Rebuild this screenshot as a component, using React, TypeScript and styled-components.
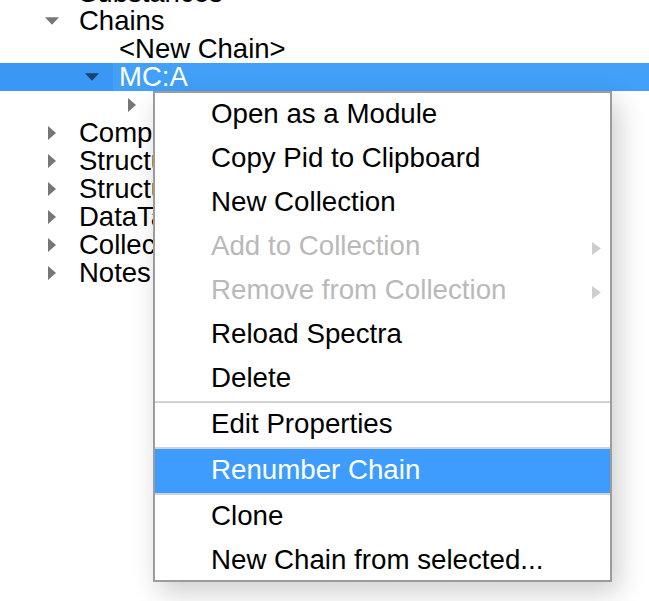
import styled, { createGlobalStyle } from "styled-components";

const GlobalStyle = createGlobalStyle`
  html, body {
    margin: 0;
    padding: 0;
    background: #ffffff;
    overflow: hidden;
  }
  body {
    font-family: "Liberation Sans", Arial, Helvetica, sans-serif;
  }
`;

const Screen = styled.div`
  position: relative;
  width: 649px;
  height: 601px;
  overflow: hidden;
  background: #ffffff;
`;

const Tree = styled.div`
  display: flex;
  flex-direction: column;
  margin-top: -21.5px;
`;

const Row = styled.div<{ level: number; selected?: boolean }>`
  display: flex;
  align-items: center;
  height: 28px;
  padding-left: ${(p) => 45 + p.level * 40}px;
  background: ${(p) => (p.selected ? "#3a97f3" : "transparent")};
  color: ${(p) => (p.selected ? "#ffffff" : "#000000")};
  font-size: 27.5px;
  line-height: 28px;
  white-space: nowrap;
`;

const Toggle = styled.span`
  display: flex;
  align-items: center;
  justify-content: center;
  width: 14px;
  height: 28px;
  margin-right: 20px;
  flex: none;
`;

const Label = styled.span<{ selected?: boolean }>`
  display: flex;
  align-items: center;
  height: 28px;
  padding-right: 6px;
  margin-left: -6px;
  padding-left: 6px;
  flex: 1;
  background: ${(p) => (p.selected ? "#42a0f9" : "transparent")};
`;

const Caret = ({ open, color }: { open: boolean; color: string }) =>
  open ? (
    <svg width="15" height="8" viewBox="0 0 15 8">
      <polygon points="0,0 15,0 7.5,8" fill={color} />
    </svg>
  ) : (
    <svg width="8" height="14" viewBox="0 0 8 14">
      <polygon points="0,0 8,7 0,14" fill={color} />
    </svg>
  );

const Menu = styled.div`
  position: absolute;
  left: 153px;
  top: 91px;
  width: 459px;
  height: 491px;
  box-sizing: border-box;
  border: 2px solid #9c9c9c;
  background: #ffffff;
  box-shadow: 6px 10px 26px rgba(0, 0, 0, 0.2);
  overflow: hidden;
  display: flex;
  flex-direction: column;
`;

const Item = styled.div<{ disabled?: boolean; active?: boolean }>`
  position: relative;
  display: flex;
  align-items: center;
  justify-content: space-between;
  flex: none;
  height: 44px;
  box-sizing: border-box;
  padding: 1px 9px 3px 56px;
  font-size: 27.7px;
  line-height: 40px;
  white-space: nowrap;
  color: ${(p) => (p.disabled ? "#b9b9b9" : p.active ? "#ffffff" : "#000000")};
  background: ${(p) => (p.active ? "#3d9cfd" : "transparent")};
`;

const Separator = styled.div`
  height: 2px;
  flex: none;
  background: #d2d2d2;
`;

const SubArrow = () => (
  <svg width="9" height="13" viewBox="0 0 9 13" style={{ marginTop: 4 }}>
    <polygon points="0,0 9,6.5 0,13" fill="#cdcdcd" />
  </svg>
);

type Node = {
  label: string;
  level: number;
  caret?: "open" | "closed";
  selected?: boolean;
};

const nodes: Node[] = [
  { label: "Substances", level: 0, caret: "closed" },
  { label: "Chains", level: 0, caret: "open" },
  { label: "<New Chain>", level: 1 },
  { label: "MC:A", level: 1, caret: "open", selected: true },
  { label: "MC:A-STT", level: 2, caret: "closed" },
  { label: "Compounds", level: 0, caret: "closed" },
  { label: "Structures", level: 0, caret: "closed" },
  { label: "Structure Sets", level: 0, caret: "closed" },
  { label: "DataTables", level: 0, caret: "closed" },
  { label: "Collections", level: 0, caret: "closed" },
  { label: "Notes", level: 0, caret: "closed" },
];

type Entry =
  | { kind: "item"; label: string; disabled?: boolean; active?: boolean; sub?: boolean }
  | { kind: "sep" };

const entries: Entry[] = [
  { kind: "item", label: "Open as a Module" },
  { kind: "item", label: "Copy Pid to Clipboard" },
  { kind: "item", label: "New Collection" },
  { kind: "item", label: "Add to Collection", disabled: true, sub: true },
  { kind: "item", label: "Remove from Collection", disabled: true, sub: true },
  { kind: "item", label: "Reload Spectra" },
  { kind: "item", label: "Delete" },
  { kind: "sep" },
  { kind: "item", label: "Edit Properties" },
  { kind: "sep" },
  { kind: "item", label: "Renumber Chain", active: true },
  { kind: "sep" },
  { kind: "item", label: "Clone" },
  { kind: "item", label: "New Chain from selected..." },
];

export default function App() {
  return (
    <Screen>
      <GlobalStyle />
      <Tree>
        {nodes.map((n, i) => (
          <Row key={i} level={n.level} selected={n.selected}>
            <Toggle>
              {n.caret && (
                <Caret open={n.caret === "open"} color={n.selected ? "#1d3f6b" : "#767676"} />
              )}
            </Toggle>
            <Label selected={n.selected}>{n.label}</Label>
          </Row>
        ))}
      </Tree>
      <Menu>
        {entries.map((e, i) =>
          e.kind === "sep" ? (
            <Separator key={i} />
          ) : (
            <Item key={i} disabled={e.disabled} active={e.active}>
              <span>{e.label}</span>
              {e.sub && <SubArrow />}
            </Item>
          )
        )}
      </Menu>
    </Screen>
  );
}
